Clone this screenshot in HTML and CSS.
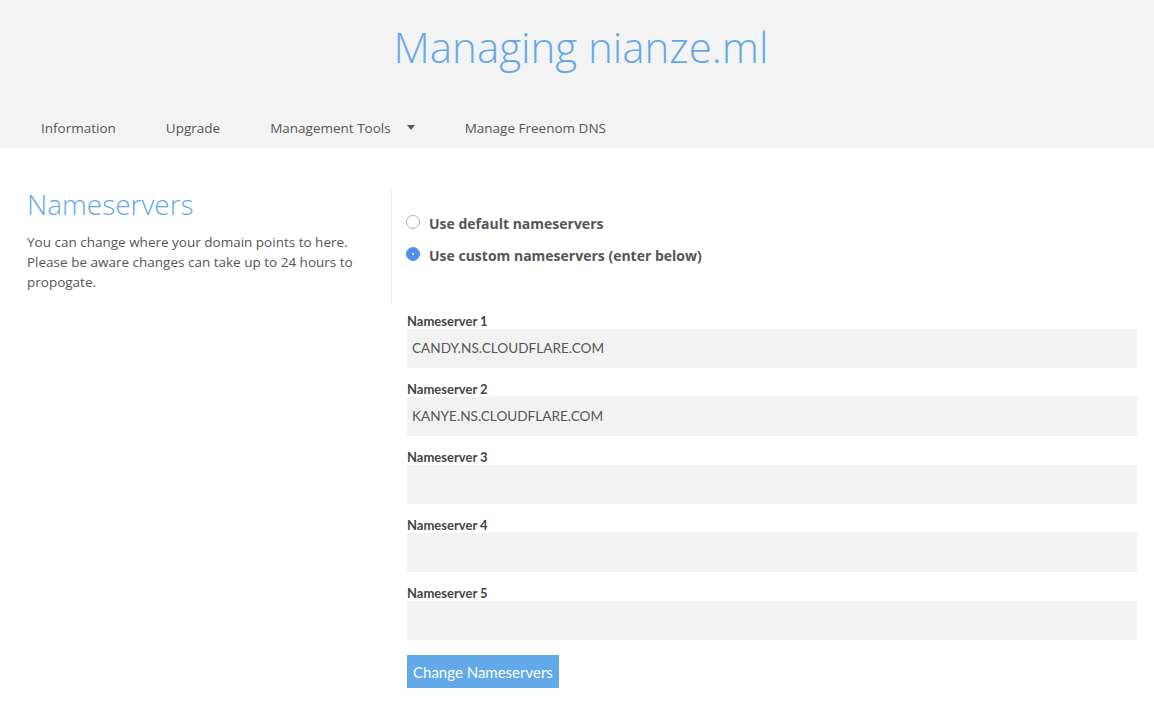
FILE: index.html
```html
<!DOCTYPE html>
<html>
<head>
<meta charset="utf-8">
<link rel="stylesheet" href="styles.css">
</head>
<body>
<header class="top">
  <h1 class="title">Managing nianze.ml</h1>
  <nav class="nav">
    <a class="nav-item">Information</a>
    <a class="nav-item">Upgrade</a>
    <a class="nav-item">Management Tools <span class="caret"></span></a>
    <a class="nav-item">Manage Freenom DNS</a>
  </nav>
</header>
<main class="main">
  <section class="intro">
    <h2 class="heading">Nameservers</h2>
    <p class="desc">You can change where your domain points to here. Please be aware changes can take up to 24 hours to propogate.</p>
  </section>
  <section class="form">
    <div class="choices">
      <label class="choice"><span class="radio"></span>Use default nameservers</label>
      <label class="choice"><span class="radio on"></span>Use custom nameservers (enter below)</label>
    </div>
    <div class="fields">
      <div class="field"><div class="label">Nameserver 1</div><div class="input">CANDY.NS.CLOUDFLARE.COM</div></div>
      <div class="field"><div class="label">Nameserver 2</div><div class="input">KANYE.NS.CLOUDFLARE.COM</div></div>
      <div class="field"><div class="label">Nameserver 3</div><div class="input"></div></div>
      <div class="field"><div class="label">Nameserver 4</div><div class="input"></div></div>
      <div class="field"><div class="label">Nameserver 5</div><div class="input"></div></div>
      <button class="btn">Change Nameservers</button>
    </div>
  </section>
</main>
</body>
</html>
```
FILE: styles.css
```css
html, body { margin: 0; padding: 0; background: #fff; }
body { font-family: "Open Sans", sans-serif; color: #555; }
.top { background: #f3f3f3; height: 148px; display: flex; flex-direction: column; }
.title { margin: 0; padding: 18px 0 0 8px; height: 90px; box-sizing: border-box; text-align: center; font-weight: 300; font-size: 42px; line-height: 58px; color: #62a9e9; }
.nav { display: flex; padding-left: 41px; height: 58px; align-items: center; padding-top: 17px; box-sizing: border-box; }
.nav-item { font-size: 13.5px; color: #555; margin-right: 50px; display: flex; align-items: center; }
.caret { display: inline-block; width: 0; height: 0; border-left: 4px solid transparent; border-right: 4px solid transparent; border-top: 5px solid #555; margin-left: 16px; }
.main { display: flex; padding: 40px 17px 0 27px; }
.intro { width: 364px; flex: none; }
.heading { margin: 0; font-weight: 300; font-size: 28px; line-height: 32px; color: #62a9e9; }
.desc { margin: 12px 0 0; font-size: 13.5px; line-height: 20px; color: #555; padding-right: 20px; }
.form { flex: 1; }
.choices { border-left: 1px solid #eee; height: 117px; padding: 26px 0 0 14px; box-sizing: border-box; display: flex; flex-direction: column; gap: 12px; }
.choice { display: flex; align-items: center; font-weight: 700; font-size: 14px; line-height: 20px; color: #555; }
.radio { width: 14px; height: 14px; border: 1px solid #b0b0b0; border-radius: 50%; box-sizing: border-box; margin-right: 9px; background: #fff; position: relative; top: -2px; }
.radio.on { background: #4f8ff0; border-color: #4f8ff0; }
.radio.on::after { content: ""; position: absolute; left: 5px; top: 5px; width: 2px; height: 2px; border-radius: 50%; background: #fff; }
.fields { padding: 9px 0 0 16px; display: flex; flex-direction: column; }
.field { height: 68px; }
.label { font-family: Lato, sans-serif; font-weight: 700; font-size: 13px; line-height: 14px; color: #444; margin-bottom: 1px; }
.input { background: #f2f2f2; height: 39px; font-family: Lato, sans-serif; font-size: 13.6px; line-height: 39px; padding-left: 5px; color: #555; }
.btn { align-self: flex-start; margin-top: 1px; background: #62a9e9; color: #fff; border: none; font-family: Lato, sans-serif; font-size: 15px; height: 33px; padding: 0 6px; cursor: pointer; }
```
